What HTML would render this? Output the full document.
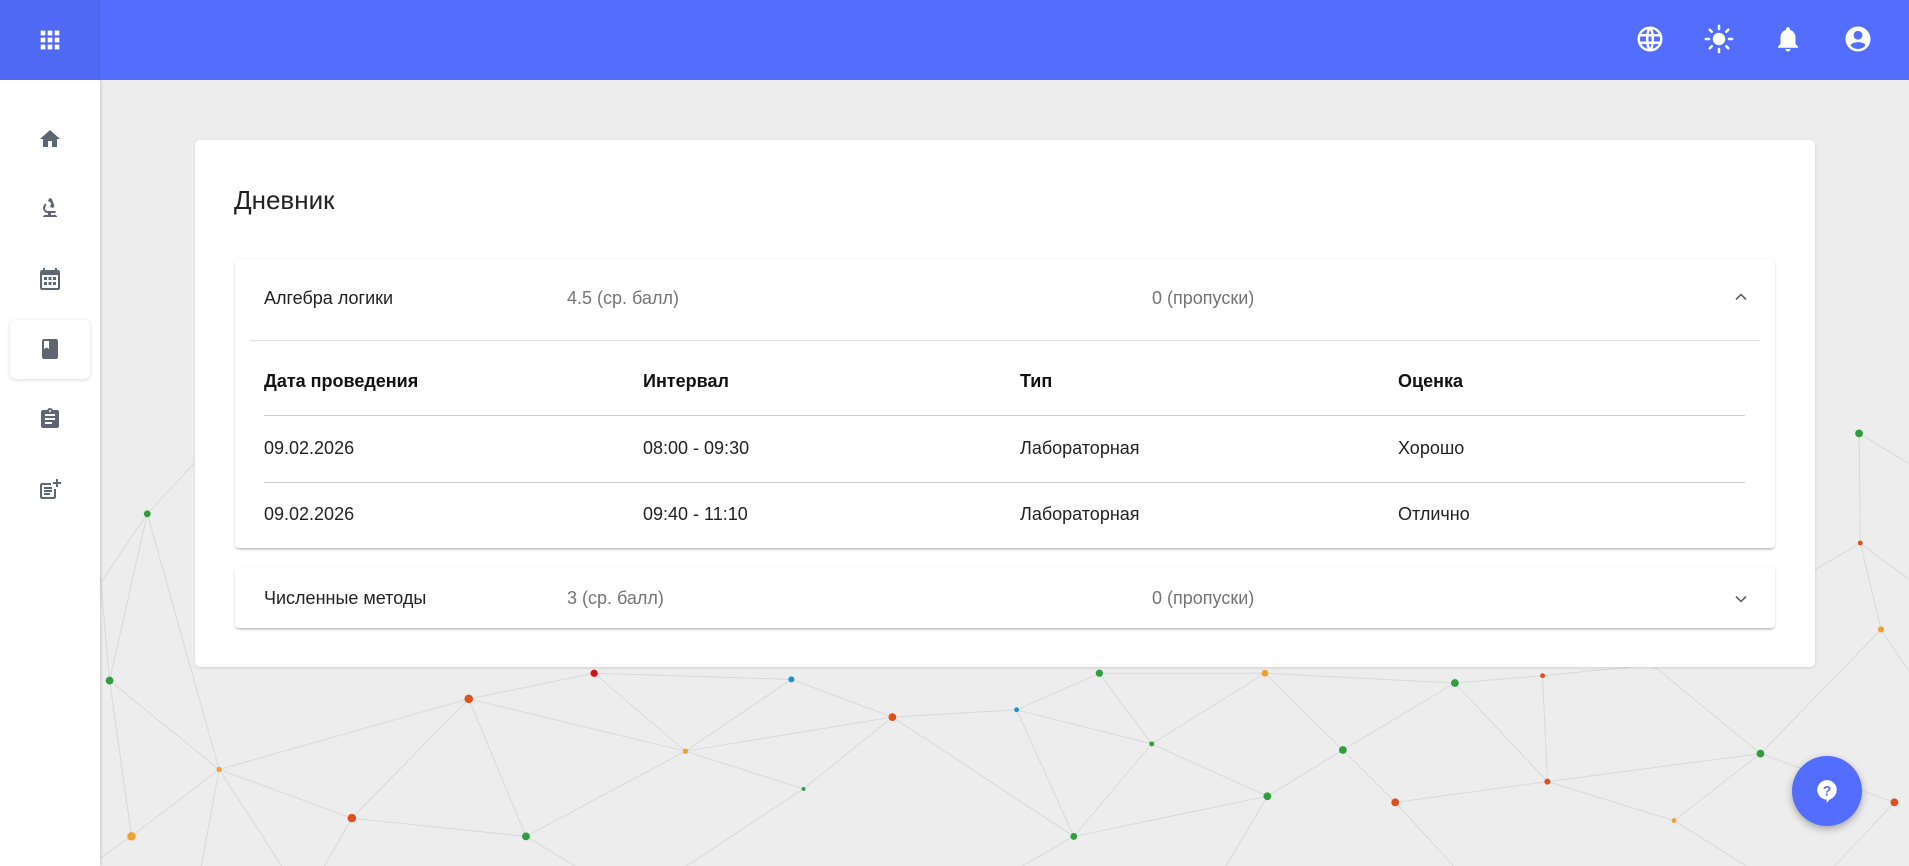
<!DOCTYPE html>
<html><head><meta charset="utf-8"><style>
*{box-sizing:border-box;margin:0;padding:0}
body{width:1909px;height:866px;overflow:hidden;background:#ededed;font-family:"Liberation Sans",Arial,sans-serif;position:relative}
#bg{position:absolute;left:0;top:0}
.top{position:absolute;left:0;top:0;width:1909px;height:80px;background:#536dfe;z-index:3}
.top .l{position:absolute;left:0;top:0;width:100px;height:80px;background:#5069f5;border-right:1px solid #4a63e8}
.side{position:absolute;left:0;top:80px;width:100px;height:786px;background:#fff;box-shadow:1px 0 3px rgba(0,0,0,.15);z-index:2}
.ic{position:absolute;left:38px;width:24px;height:24px}
.act{position:absolute;left:10px;top:240px;width:80px;height:59px;border-radius:6px;box-shadow:0 1px 4px rgba(0,0,0,.15);background:#fff}
.card{position:absolute;left:195px;top:140px;width:1620px;height:527px;background:#fff;border-radius:5px;box-shadow:0 1px 3px rgba(0,0,0,.12);z-index:1}
.card h1{position:absolute;left:39px;top:45px;font-size:26px;font-weight:400;color:#222}
.panel{position:absolute;left:40px;width:1540px;background:#fff;border-radius:4px;box-shadow:0 2px 2px -1px rgba(0,0,0,.25),0 1px 3px rgba(0,0,0,.12)}
.t{position:absolute;font-size:18px;color:#222;white-space:nowrap;line-height:20px}
.g{color:#757575}
.b{font-weight:700;color:#111}
.hr{position:absolute;height:1px;background:#cfcfcf}
.fab{position:absolute;left:1792px;top:756px;width:70px;height:70px;border-radius:50%;background:#536dfe;box-shadow:0 3px 8px rgba(0,0,0,.3);z-index:3}
</style></head><body>
<svg id="bg" width="1909" height="866" viewBox="0 0 1568 711.3" preserveAspectRatio="none">
<g stroke="#d9d9d9" stroke-width="0.8" fill="none">
<path d="M121 422L90 559M121 422L180 632M121 422L160 380M90 559L180 632M90 559L108 687M90 559L82 470M108 687L180 632M108 687L60 720M180 632L289 672M180 632L385 574M180 632L250 740M289 672L385 574M289 672L250 740M289 672L432 687M385 574L488 553M385 574L563 617M385 574L432 687M488 553L563 617M488 553L650 558M563 617L432 687M563 617L650 558M563 617L660 648M563 617L733 589M432 687L520 740M660 648L733 589M660 648L520 740M650 558L733 589M733 589L835 583M733 589L882 687M835 583L903 553M835 583L882 687M835 583L946 611M903 553L946 611M903 553L1039 553M946 611L1039 553M946 611L1041 654M946 611L882 687M882 687L790 740M882 687L1041 654M1039 553L1103 616M1041 654L1103 616M1041 654L990 740M1103 616L1146 659M1103 616L1195 561M1039 553L1195 561M1146 659L1271 642M1146 659L1220 740M1195 561L1267 555M1195 561L1271 642M1267 555L1357 546M1267 555L1271 642M1271 642L1375 674M1271 642L1446 619M1357 546L1446 619M1375 674L1446 619M1375 674L1480 740M1446 619L1545 517M1446 619L1556 659M1357 546L1528 446M1528 446L1545 517M1527 356L1528 446M1527 356L1600 400M1545 517L1600 600M1556 659L1480 740M1528 446L1600 500M82 480L121 422M180 632L160 740"/>
</g>
<g>
<circle cx="121" cy="422" r="2.8" fill="#2e9e3e"/><circle cx="90" cy="559" r="3.2" fill="#2e9e3e"/><circle cx="108" cy="687" r="3.5" fill="#f0a030"/><circle cx="180" cy="632" r="2.2" fill="#f0a030"/><circle cx="289" cy="672" r="3.5" fill="#e0501f"/><circle cx="385" cy="574" r="3.5" fill="#e0501f"/><circle cx="488" cy="553" r="3" fill="#d8101a"/><circle cx="432" cy="687" r="3.2" fill="#2e9e3e"/><circle cx="563" cy="617" r="2.2" fill="#f0a030"/><circle cx="650" cy="558" r="2.5" fill="#2090d0"/><circle cx="660" cy="648" r="1.6" fill="#2e9e3e"/><circle cx="733" cy="589" r="3.2" fill="#e0501f"/><circle cx="835" cy="583" r="2" fill="#2090d0"/><circle cx="882" cy="687" r="2.8" fill="#2e9e3e"/><circle cx="903" cy="553" r="3" fill="#2e9e3e"/><circle cx="946" cy="611" r="2" fill="#2e9e3e"/><circle cx="1039" cy="553" r="2.8" fill="#f0a030"/><circle cx="1041" cy="654" r="3.2" fill="#2e9e3e"/><circle cx="1103" cy="616" r="3.2" fill="#2e9e3e"/><circle cx="1146" cy="659" r="3.2" fill="#e0501f"/><circle cx="1195" cy="561" r="3.2" fill="#2e9e3e"/><circle cx="1267" cy="555" r="2" fill="#e0501f"/><circle cx="1271" cy="642" r="2.5" fill="#e0501f"/><circle cx="1357" cy="546" r="2" fill="#2090d0"/><circle cx="1375" cy="674" r="2" fill="#f0a030"/><circle cx="1446" cy="619" r="3.2" fill="#2e9e3e"/><circle cx="1527" cy="356" r="3.2" fill="#2e9e3e"/><circle cx="1528" cy="446" r="2" fill="#e0501f"/><circle cx="1545" cy="517" r="2.5" fill="#f0a030"/><circle cx="1556" cy="659" r="3.2" fill="#e0501f"/>
</g></svg>

<div class="top"><div class="l">
<svg style="position:absolute;left:36px;top:26px" width="28" height="28" viewBox="0 0 24 24" fill="#fff"><path d="M4 8h4V4H4v4zm6 12h4v-4h-4v4zm-6 0h4v-4H4v4zm0-6h4v-4H4v4zm6 0h4v-4h-4v4zm6-10v4h4V4h-4zm-6 4h4V4h-4v4zm6 6h4v-4h-4v4zm0 6h4v-4h-4v4z"/></svg></div>
<svg style="position:absolute;left:1635px;top:24px" width="30" height="30" viewBox="0 0 24 24" fill="none" stroke="#fff" stroke-width="2"><circle cx="12" cy="12" r="9"/><path d="M3 9h18M3 15h18M12 3c-3 3-3 15 0 18M12 3c3 3 3 15 0 18"/></svg>
<svg style="position:absolute;left:1704px;top:24px" width="30" height="30" viewBox="0 0 24 24" fill="#fff"><circle cx="12" cy="12" r="5"/><g stroke="#fff" stroke-width="2" stroke-linecap="round"><path d="M12 1.5v2.5M12 20v2.5M1.5 12h2.5M20 12h2.5M4.6 4.6l1.6 1.6M17.8 17.8l1.6 1.6M4.6 19.4l1.6-1.6M17.8 6.2l1.6-1.6"/></g></svg>
<svg style="position:absolute;left:1773px;top:24px" width="30" height="30" viewBox="0 0 24 24" fill="#fff"><path d="M12 22c1.1 0 2-.9 2-2h-4c0 1.1.9 2 2 2zm6-6v-5c0-3.07-1.64-5.64-4.5-6.32V4c0-.83-.67-1.5-1.5-1.5s-1.5.67-1.5 1.5v.68C7.630 5.36 6 7.92 6 11v5l-2 2v1h16v-1l-2-2z"/></svg>
<svg style="position:absolute;left:1843px;top:24px" width="30" height="30" viewBox="0 0 24 24" fill="#fff"><path d="M12 2C6.48 2 2 6.48 2 12s4.48 10 10 10 10-4.48 10-10S17.52 2 12 2zm0 3.5c1.93 0 3.5 1.57 3.5 3.5S13.93 12.5 12 12.5 8.5 10.93 8.5 9 10.07 5.5 12 5.5zM12 20c-2.5 0-4.7-1.2-6.1-3.1C7 15.3 9.6 14.5 12 14.5s5 .8 6.1 2.4C16.7 18.8 14.5 20 12 20z"/></svg>
</div>

<div class="side">
<div class="act"></div>
<svg class="ic" style="top:47px" viewBox="0 0 24 24" fill="#5f6673"><path d="M10 20v-6h4v6h5v-8h3L12 3 2 12h3v8z"/></svg>
<svg class="ic" style="top:116px" viewBox="0 0 24 24" fill="#5f6673"><path d="M7 19c-1.1 0-2 .9-2 2h14c0-1.1-.9-2-2-2h-4v-2h3c1.1 0 2-.9 2-2h-8c-1.66 0-3-1.34-3-3 0-1.09.59-2.04 1.46-2.56C8.170 9.03 8 8.54 8 8c0-.21.04-.42.09-.62C6.28 8.13 5 9.92 5 12c0 2.76 2.24 5 5 5v2H7zM10.56 5.51C11.91 5.54 13 6.640 13 8c0 .75-.33 1.41-.85 1.87l.59 1.62.94-.34.34.94 1.88-.68-.34-.94.94-.34-2.74-7.53-.94.34-.34-.94-1.88.68.34.94-.94.35.55 1.54z"/></svg>
<svg class="ic" style="top:187px" viewBox="0 0 24 24" fill="#5f6673"><path d="M20 3h-1V1h-2v2H7V1H5v2H4c-1.1 0-2 .9-2 2v16c0 1.1.9 2 2 2h16c1.1 0 2-.9 2-2V5c0-1.1-.9-2-2-2zm0 18H4V8h16v13zM6 10h3v3H6zm4.5 0h3v3h-3zm4.5 0h3v3h-3zM6 15h3v3H6zm4.5 0h3v3h-3zm4.5 0h3v3h-3z"/></svg>
<svg class="ic" style="top:257px" viewBox="0 0 24 24" fill="#5f6673"><path d="M18 2H6c-1.1 0-2 .9-2 2v16c0 1.1.9 2 2 2h12c1.1 0 2-.9 2-2V4c0-1.1-.9-2-2-2zM6 4h5v8l-2.5-1.5L6 12V4z"/></svg>
<svg class="ic" style="top:327px" viewBox="0 0 24 24" fill="#5f6673"><path d="M19 3h-4.18C14.4 1.84 13.3 1 12 1s-2.4.84-2.82 2H5c-1.1 0-2 .9-2 2v14c0 1.1.9 2 2 2h14c1.1 0 2-.9 2-2V5c0-1.1-.9-2-2-2zm-7 0c.55 0 1 .45 1 1s-.45 1-1 1-1-.45-1-1 .45-1 1-1zm2 14H7v-2h7v2zm3-4H7v-2h10v2zm0-4H7V7h10v2z"/></svg>
<svg class="ic" style="top:397px" viewBox="0 0 24 24" fill="#5f6673"><path d="M18 2v3h-3v2h3v3h2V7h3V5h-3V2zM4 6c-1.1 0-2 .9-2 2v12c0 1.1.9 2 2 2h12c1.1 0 2-.9 2-2v-8h-2v8H4V8h9V6zm2 4v2h8v-2zm0 3v2h8v-2zm0 3v2h6v-2z"/></svg>
</div>

<div class="card">
<h1>Дневник</h1>
<div class="panel" style="top:119px;height:289px">
<div class="t" style="left:29px;top:29px">Алгебра логики</div>
<div class="t g" style="left:332px;top:29px">4.5 (ср. балл)</div>
<div class="t g" style="left:917px;top:29px">0 (пропуски)</div>
<svg style="position:absolute;left:1496px;top:28px" width="20" height="20" viewBox="0 0 24 24" fill="none" stroke="#666" stroke-width="2"><path d="M6 15l6-6 6 6"/></svg>
<div class="hr" style="left:15px;top:81px;width:1510px;background:#e0e0e0"></div>
<div class="t b" style="left:29px;top:112px">Дата проведения</div>
<div class="t b" style="left:408px;top:112px">Интервал</div>
<div class="t b" style="left:785px;top:112px">Тип</div>
<div class="t b" style="left:1163px;top:112px">Оценка</div>
<div class="hr" style="left:29px;top:156px;width:1481px"></div>
<div class="t" style="left:29px;top:179px">09.02.2026</div>
<div class="t" style="left:408px;top:179px">08:00 - 09:30</div>
<div class="t" style="left:785px;top:179px">Лабораторная</div>
<div class="t" style="left:1163px;top:179px">Хорошо</div>
<div class="hr" style="left:29px;top:223px;width:1481px"></div>
<div class="t" style="left:29px;top:245px">09.02.2026</div>
<div class="t" style="left:408px;top:245px">09:40 - 11:10</div>
<div class="t" style="left:785px;top:245px">Лабораторная</div>
<div class="t" style="left:1163px;top:245px">Отлично</div>
</div>
<div class="panel" style="top:427px;height:61px">
<div class="t" style="left:29px;top:21px">Численные методы</div>
<div class="t g" style="left:332px;top:21px">3 (ср. балл)</div>
<div class="t g" style="left:917px;top:21px">0 (пропуски)</div>
<svg style="position:absolute;left:1496px;top:22px" width="20" height="20" viewBox="0 0 24 24" fill="none" stroke="#666" stroke-width="2"><path d="M6 9l6 6 6-6"/></svg>
</div>
</div>

<div class="fab"><svg style="position:absolute;left:22px;top:22px" width="26" height="26" viewBox="0 0 24 24"><path d="M12 2a9 9 0 0 0-9 9c0 4.9 3.9 8.8 8.7 9v3l3-3.3c3.6-1.3 6.3-4.7 6.3-8.7a9 9 0 0 0-9-9z" fill="#fff"/><text x="12" y="16" text-anchor="middle" font-family="Liberation Sans" font-weight="700" font-size="13" fill="#536dfe">?</text></svg></div>
</body></html>
